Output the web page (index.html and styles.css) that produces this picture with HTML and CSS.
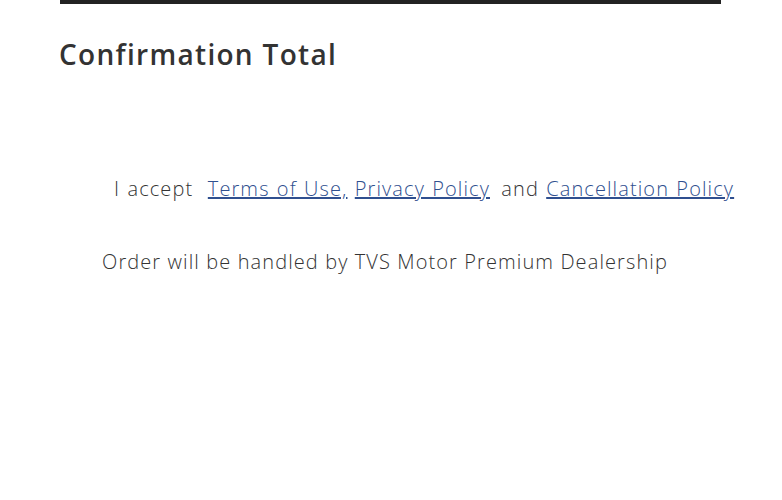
FILE: index.html
```html
<!DOCTYPE html>
<html>
<head>
<meta charset="utf-8">
<link rel="stylesheet" href="styles.css">
</head>
<body>
<div class="page">
  <div class="topbar"></div>
  <h2 class="title">Confirmation Total</h2>
  <p class="accept">I accept&nbsp; <a href="#">Terms of Use,</a> <a href="#">Privacy Policy</a> <span class="and">and</span> <a href="#">Cancellation Policy</a></p>
  <p class="note">Order will be handled by TVS Motor Premium Dealership</p>
</div>
</body>
</html>
```
FILE: styles.css
```css
html, body { margin: 0; padding: 0; background: #fff; }
.page { width: 782px; height: 500px; font-family: "Open Sans", sans-serif; color: #333; }
.topbar { margin-left: 60px; width: 661px; height: 4px; background: #222; }
.title { margin: 32px 0 0 59px; font-family: "Open Sans", sans-serif; font-weight: 600; font-size: 28px; line-height: 36px; color: #333; letter-spacing: 1.3px; }
.accept { margin: 103px 0 0 114px; font-size: 20px; font-weight: 300; line-height: 28px; color: #333; white-space: nowrap; letter-spacing: 1.1px; word-spacing: 1px; }
.accept a { color: #2f4f8f; text-decoration: underline; }
.and { margin-left: 4px; }
.note { margin: 45px 0 0 102px; font-size: 20px; font-weight: 300; line-height: 28px; color: #333; white-space: nowrap; letter-spacing: 1.1px; }
```
